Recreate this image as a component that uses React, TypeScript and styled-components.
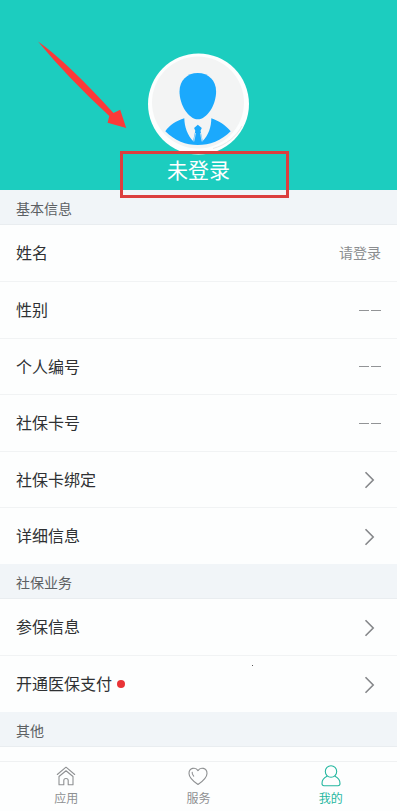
import React from 'react';
import styled, { createGlobalStyle } from 'styled-components';

const GlobalStyle = createGlobalStyle`
  *, *::before, *::after { box-sizing: border-box; }
  body {
    margin: 0;
    background: #fdfefe;
    font-family: "Noto Sans CJK SC", "Noto Sans", sans-serif;
  }
  button { font: inherit; color: inherit; border: 0; padding: 0; background: none; cursor: pointer; }
`;

const Page = styled.div`
  display: flex;
  flex-direction: column;
  min-height: 100vh;
  background: #fdfefe;
`;

const Content = styled.main`
  flex: 1;
  margin-right: 3px;
`;

const Profile = styled.header`
  position: relative;
  display: flex;
  flex-direction: column;
  align-items: center;
  padding: 53px 0 7px;
  background: #1ccdbf;
`;

const Avatar = styled.svg`
  display: block;
  width: 102px;
  height: 102px;
`;

const LoginName = styled.button`
  && {
    font-size: 21px;
    line-height: 28px;
    color: #fff;
  }
`;

const Highlight = styled.div`
  position: absolute;
  top: 151px;
  left: calc(50% - 79px);
  width: 169px;
  height: 47px;
  border: 3px solid #dc3f3e;
  pointer-events: none;
`;

const Arrow = styled.svg`
  position: absolute;
  top: 38px;
  left: 34px;
  width: 96px;
  height: 94px;
  pointer-events: none;
`;

const SectionTitle = styled.h2`
  margin: 0;
  padding: 8px 16px 6px;
  border-bottom: 1px solid #e9edf0;
  background: #f1f5f8;
  color: #5c6063;
  font-size: 14px;
  font-weight: 400;
  line-height: 20px;
`;

const List = styled.ul`
  margin: 0;
  padding: 0;
  list-style: none;
`;

const Item = styled.li`
  display: flex;
  min-height: 56px;
  &:nth-child(even) { min-height: 57px; }
  & + & { border-top: 1px solid #f1f3f4; }
`;

const Row = styled.button`
  position: relative;
  display: flex;
  flex: 1;
  align-items: center;
  && { padding: 0 16px 2px; }
  text-align: left;
`;

const Label = styled.span`
  color: #2f3133;
  font-size: 16px;
  line-height: 24px;
`;

const Value = styled.span`
  margin-left: auto;
  color: #8b8d8f;
  font-size: 14px;
  line-height: 24px;
`;

const Dashes = styled.span`
  display: flex;
  gap: 2px;
  margin: 2px 0 0 auto;
  &::before, &::after {
    content: "";
    width: 10px;
    height: 1px;
    background: #929496;
  }
`;

const Dot = styled.span`
  width: 8px;
  height: 8px;
  margin: 2px 0 0 5px;
  border-radius: 50%;
  background: #e93336;
`;

const Speck = styled.span`
  position: absolute;
  top: 9px;
  left: 252px;
  width: 1px;
  height: 1px;
  background: #555;
`;

const Chevron = styled.svg`
  width: 12px;
  height: 18px;
  margin: 3px 5px 0 auto;
  fill: none;
  stroke: #85878a;
  stroke-width: 1.6;
`;

const TabBar = styled.nav`
  position: sticky;
  bottom: 0;
  display: grid;
  grid-template-columns: repeat(3, 1fr);
  min-height: 50px;
  margin-right: 3px;
  border-top: 1px solid #eff1f2;
  background: #fdfefe;
`;

const Tab = styled.button<{ $active?: boolean }>`
  display: flex;
  flex-direction: column;
  align-items: center;
  justify-content: flex-start;
  && {
    padding-top: 2px;
    color: ${p => (p.$active ? '#25b7a0' : '#8e9092')};
    font-size: 12px;
    line-height: 20px;
  }
`;

const TabIcon = styled.svg`
  width: 24px;
  height: 24px;
  fill: none;
  stroke: currentColor;
  stroke-width: 1.1;
  stroke-linejoin: round;
  stroke-linecap: round;
`;

type Entry = { label: string; value?: string; link?: boolean; badge?: boolean };

const basic: Entry[] = [
  { label: '姓名', value: '请登录' },
  { label: '性别' },
  { label: '个人编号' },
  { label: '社保卡号' },
  { label: '社保卡绑定', link: true },
  { label: '详细信息', link: true },
];

const services: Entry[] = [
  { label: '参保信息', link: true },
  { label: '开通医保支付', link: true, badge: true },
];

function Entries({ items }: { items: Entry[] }) {
  return (
    <List>
      {items.map(item => (
        <Item key={item.label}>
          <Row type="button">
            <Label>{item.label}</Label>
            {item.badge && <><Dot /><Speck /></>}
            {item.link ? (
              <Chevron viewBox="0 0 12 18" aria-hidden="true"><path d="M1.5 1.2 9.2 9 1.5 16.8" /></Chevron>
            ) : item.value ? <Value>{item.value}</Value> : <Dashes />}
          </Row>
        </Item>
      ))}
    </List>
  );
}

export default function App() {
  return (
    <>
      <GlobalStyle />
      <Page>
        <Content>
          <Profile>
            <Avatar viewBox="0 0 102 102" aria-hidden="true">
              <circle cx="50.5" cy="51" r="50.5" fill="#fdfefe" />
              <circle cx="50" cy="49.5" r="46" fill="#f3f4f4" />
              <path d="M65 95.5C78 92 88 84 94 73" fill="none" stroke="#e9eaea" strokeWidth="1" />
              <path d="M49.8 20C60.5 20 68.1 27.5 68.1 38.5C68.1 52 59 66.3 49.8 66.3S31.5 52 31.5 38.5C31.5 27.5 39.1 20 49.8 20Z" fill="#1ba9fd" />
              <path d="M36.3 65.2C36.5 74 39.5 82 45.1 88L47.3 77.7 46.1 75 49.8 71.7 53.8 75 52.5 77.7 54.7 88C60.5 82 63.3 74 63.3 65.2C70.5 67.5 77.5 72 82.7 78.2C73.5 87.5 61.5 92 49.8 92S26.5 87.5 17.3 78.2C21.5 72 28.5 67.5 36.3 65.2Z" fill="#1ba9fd" />
              <path d="M45.8 88.5 47.5 80M54.1 88.5 52.5 80" stroke="#f3f4f4" strokeWidth=".7" />
            </Avatar>
            <LoginName type="button">未登录</LoginName>
            <Arrow viewBox="0 0 96 94" aria-hidden="true">
              <path d="M4 3.5Q32 23 79.5 75L86.2 71.8 92.2 90 73.6 84.8 75.3 78Q34 40 4 3.5Z" fill="#fb3a39" />
            </Arrow>
            <Highlight />
          </Profile>
          <SectionTitle>基本信息</SectionTitle>
          <Entries items={basic} />
          <SectionTitle>社保业务</SectionTitle>
          <Entries items={services} />
          <SectionTitle>其他</SectionTitle>
        </Content>
        <TabBar>
          <Tab type="button">
            <TabIcon viewBox="0 0 24 24" aria-hidden="true">
              <path d="M3.3 10.5 12 3.2 20.7 10.5M5 12.5V20.8H9.8V16.5C9.8 13.8 14.2 13.8 14.2 16.5V20.8H19V12.5L12 6.8Z" />
            </TabIcon>
            应用
          </Tab>
          <Tab type="button">
            <TabIcon viewBox="0 0 24 24" aria-hidden="true">
              <path d="M12 20.5C8 17.7 3 13.8 3 9.4C3 3.8 9.6 2.6 12 6.6C14.4 2.6 21 3.8 21 9.4C21 13.8 16 17.7 12 20.5ZM6.2 8.2C5.9 9.9 6.7 11.1 7.7 12.1" />
            </TabIcon>
            服务
          </Tab>
          <Tab type="button" $active>
            <TabIcon viewBox="0 0 24 24" aria-hidden="true">
              <circle cx="12" cy="7.5" r="5.7" />
              <path d="M8 12.3C5.2 13.6 3 16.5 3 19.5C3 21 3.7 21.7 5 21.7H19C20.3 21.7 21 21 21 19.5C21 16.5 18.8 13.6 16 12.3" />
            </TabIcon>
            我的
          </Tab>
        </TabBar>
      </Page>
    </>
  );
}
